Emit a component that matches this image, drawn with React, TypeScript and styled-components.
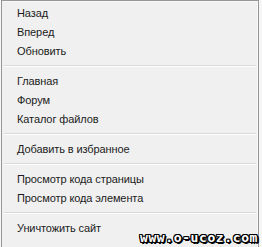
import React from 'react';
import styled, { createGlobalStyle } from 'styled-components';

const GlobalStyle = createGlobalStyle`
  html, body {
    margin: 0;
    padding: 0;
    background: #f6f6f6;
    overflow: hidden;
  }
`;

const Page = styled.div`
  position: relative;
  width: 262px;
  height: 247px;
  overflow: hidden;
  background: #f6f6f6;
`;

const Menu = styled.ul`
  list-style: none;
  margin: 0 0 0 1px;
  padding: 2.5px 2px 0 2px;
  width: 252px;
  height: 260px;
  background: #f0f0f0;
  border: 1px solid #979797;
  border-bottom: none;
  box-shadow: inset -1px 0 0 #f8f8f8, inset 0 1px 0 #f8f8f8;
  font-family: "Liberation Sans", Arial, sans-serif;
  font-size: 11px;
  letter-spacing: -0.1px;
  color: #1b1b1b;
`;

const Item = styled.li`
  height: 19px;
  line-height: 19px;
  padding-left: 13px;
  white-space: nowrap;
`;

const Separator = styled.li`
  height: 11px;
  display: flex;
  align-items: center;
  &::before {
    content: '';
    flex: 1;
    height: 0;
    border-top: 1px solid #d9d9d9;
    border-bottom: 1px solid #ffffff;
  }
`;

const Watermark = styled.div`
  position: absolute;
  right: 4px;
  bottom: 2px;
  font-family: "DejaVu Sans Mono", "Liberation Mono", monospace;
  font-weight: bold;
  font-size: 13px;
  letter-spacing: 0.6px;
  color: #ffffff;
  text-shadow:
    -1px -1px 0 #000, 1px -1px 0 #000, -1px 1px 0 #000, 1px 1px 0 #000,
    0 -1px 0 #000, 0 1px 0 #000, -1px 0 0 #000, 1px 0 0 #000,
    2px 1px 0 #000, 1px 2px 0 #000;
`;

type Entry = string | null;

const entries: Entry[] = [
  'Назад',
  'Вперед',
  'Обновить',
  null,
  'Главная',
  'Форум',
  'Каталог файлов',
  null,
  'Добавить в избранное',
  null,
  'Просмотр кода страницы',
  'Просмотр кода элемента',
  null,
  'Уничтожить сайт',
];

export default function App() {
  return (
    <Page>
      <GlobalStyle />
      <Menu>
        {entries.map((e, i) =>
          e === null ? <Separator key={i} /> : <Item key={i}>{e}</Item>
        )}
      </Menu>
      <Watermark>www.o-ucoz.com</Watermark>
    </Page>
  );
}
